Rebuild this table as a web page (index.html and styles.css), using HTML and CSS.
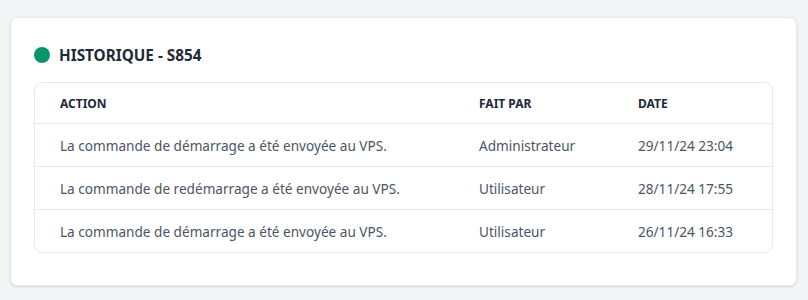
FILE: index.html
```html
<!DOCTYPE html>
<html lang="fr">
<head>
<meta charset="utf-8">
<link rel="stylesheet" href="styles.css">
</head>
<body>
<div class="card">
  <div class="title">
    <span class="dot"></span>
    <h2>HISTORIQUE - S854</h2>
  </div>
  <div class="table-wrap">
    <table>
      <thead>
        <tr><th class="c1">ACTION</th><th class="c2">FAIT PAR</th><th class="c3">DATE</th></tr>
      </thead>
      <tbody>
        <tr><td>La commande de démarrage a été envoyée au VPS.</td><td>Administrateur</td><td>29/11/24 23:04</td></tr>
        <tr><td>La commande de redémarrage a été envoyée au VPS.</td><td>Utilisateur</td><td>28/11/24 17:55</td></tr>
        <tr><td>La commande de démarrage a été envoyée au VPS.</td><td>Utilisateur</td><td>26/11/24 16:33</td></tr>
      </tbody>
    </table>
  </div>
</div>
</body>
</html>
```
FILE: styles.css
```css
html, body { margin: 0; padding: 0; }
body {
  background: #f4f5f7;
  font-family: "Noto Sans", "Open Sans", sans-serif;
  padding: 17px 11px 0 10px;
  height: 300px;
  box-sizing: border-box;
}
.card {
  background: #fff;
  border: 1px solid #e5e7eb;
  border-radius: 7px;
  box-shadow: 0 1px 3px rgba(0,0,0,0.12);
  padding: 26px 23px 33px 23px;
  height: 269px;
  box-sizing: border-box;
}
.title {
  display: flex;
  align-items: center;
  gap: 9px;
  height: 22px;
  margin-bottom: 16px;
}
.dot {
  width: 16px; height: 16px;
  border-radius: 50%;
  background: #079669;
}
.title h2 {
  margin: 0;
  font-size: 15.3px;
  font-weight: 700;
  color: #1f2937;
}
.table-wrap {
  border: 1px solid #e5e7eb;
  border-radius: 8px;
  overflow: hidden;
}
table {
  width: 100%;
  border-collapse: collapse;
}
th {
  text-align: left;
  font-size: 12px;
  font-weight: 700;
  color: #1f2937;
  height: 40px;
  padding: 0 0 0 25px;
  border-bottom: 1px solid #e5e7eb;
}
td {
  font-size: 13.6px;
  color: #4b5563;
  height: 42px;
  padding: 0 0 0 25px;
  border-bottom: 1px solid #e5e7eb;
}
tbody tr:last-child td { border-bottom: none; }
.c1 { width: 394px; }
.c2 { width: 134px; }
```
